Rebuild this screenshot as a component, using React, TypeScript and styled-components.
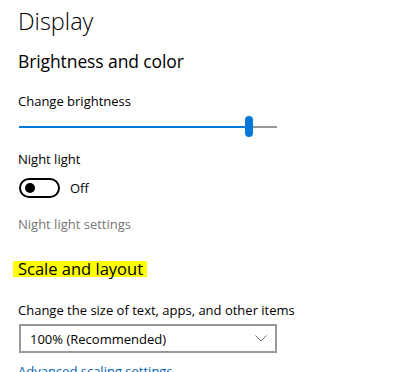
import React from "react";
import styled, { createGlobalStyle } from "styled-components";

const GlobalStyle = createGlobalStyle`
  body {
    margin: 0;
    background: #ffffff;
    font-family: "Open Sans", "Noto Sans", sans-serif;
    color: #000000;
    overflow: hidden;
  }
`;

const brightness = 89;

const App: React.FC = () => {
  return (
    <>
      <GlobalStyle />
      <Page>
        <Title>Display</Title>
        <Section $gap={13}>Brightness and color</Section>
        <Label $gap={18}>Change brightness</Label>
        <Slider>
          <Track>
            <Fill style={{ width: `${brightness}%` }} />
            <Thumb style={{ left: `${brightness}%` }} />
          </Track>
        </Slider>
        <Label $gap={11}>Night light</Label>
        <ToggleRow>
          <Toggle>
            <Knob />
          </Toggle>
          <ToggleText>Off</ToggleText>
        </ToggleRow>
        <Label $gap={16} $muted>
          Night light settings
        </Label>
        <Highlight>Scale and layout</Highlight>
        <Label $gap={23}>Change the size of text, apps, and other items</Label>
        <Dropdown>
          <span>100% (Recommended)</span>
          <svg width="12" height="7" viewBox="0 0 12 7">
            <path d="M0.5 0.5 L6 6 L11.5 0.5" fill="none" stroke="#6b6b6b" strokeWidth="1" />
          </svg>
        </Dropdown>
        <Link>Advanced scaling settings</Link>
      </Page>
    </>
  );
};

export default App;

const Page = styled.div`
  display: flex;
  flex-direction: column;
  align-items: flex-start;
  padding: 6px 0 0 18px;

  & > * {
    flex-shrink: 0;
  }
`;

const Title = styled.div`
  font-size: 23.5px;
  font-weight: 300;
  line-height: 30px;
`;

const Section = styled.div<{ $gap: number }>`
  margin-top: ${(p) => p.$gap}px;
  font-size: 17.5px;
  letter-spacing: -0.1px;
  line-height: 24px;
`;

const Label = styled.div<{ $gap: number; $muted?: boolean }>`
  margin-top: ${(p) => p.$gap}px;
  font-size: 13px;
  line-height: 20px;
  color: ${(p) => (p.$muted ? "#767676" : "#000000")};
`;

const Slider = styled.div`
  margin: 5px 0 0 1px;
  width: 258px;
  height: 22px;
  display: flex;
  align-items: center;
`;

const Track = styled.div`
  position: relative;
  width: 100%;
  height: 2px;
  background: #999999;
`;

const Fill = styled.div`
  height: 100%;
  background: #0078d7;
`;

const Thumb = styled.div`
  position: absolute;
  top: -10px;
  width: 8px;
  height: 21px;
  margin-left: -4px;
  border-radius: 4px;
  background: #0078d7;
`;

const ToggleRow = styled.div`
  margin: 9px 0 0 1px;
  display: flex;
  align-items: center;
  gap: 10px;
`;

const Toggle = styled.div`
  width: 41px;
  height: 20px;
  box-sizing: border-box;
  border: 2px solid #000000;
  border-radius: 10px;
  display: flex;
  align-items: center;
  padding-left: 4px;
`;

const Knob = styled.div`
  width: 10px;
  height: 10px;
  border-radius: 50%;
  background: #000000;
`;

const ToggleText = styled.span`
  font-size: 13px;
  line-height: 20px;
`;

const Highlight = styled.div`
  margin: 27px 0 0 -5px;
  padding: 0 4px 0 5px;
  font-size: 16.5px;
  line-height: 16px;
  background: #ffff00;
`;

const Dropdown = styled.div`
  margin: 4px 0 0 1px;
  width: 258px;
  height: 29px;
  box-sizing: border-box;
  border: 2px solid #999999;
  display: flex;
  align-items: center;
  justify-content: space-between;
  padding: 0 8px 0 9px;
  font-size: 13px;
`;

const Link = styled.div`
  margin-top: 8px;
  font-size: 13px;
  line-height: 20px;
  color: #0063b1;
`;
